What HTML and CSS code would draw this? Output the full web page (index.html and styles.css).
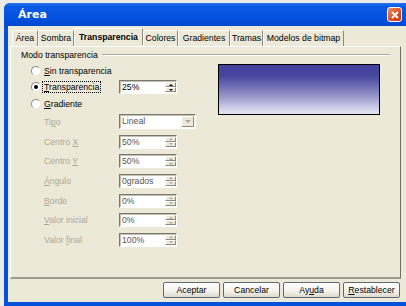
FILE: index.html
```html
<!DOCTYPE html>
<html>

<head>
  <meta charset="utf-8">
  <link rel="stylesheet" href="styles.css">
</head>

<body>
<div class="window">
  <div class="titlebar">
    <span class="title">Área</span>
    <span class="close">
      <svg width="8" height="8" viewBox="0 0 8 8"><path d="M1 1 L7 7 M7 1 L1 7" stroke="#fff" stroke-width="1.8" /></svg>
    </span>
  </div>

  <div class="client">
    <div class="tabs">
      <div class="tab" style="width: 26px">Área</div>
      <div class="tab" style="width: 36px">Sombra</div>
      <div class="tab active" style="width: 69px">Transparencia</div>
      <div class="tab" style="width: 35px">Colores</div>
      <div class="tab" style="width: 52px">Gradientes</div>
      <div class="tab" style="width: 33px">Tramas</div>
      <div class="tab" style="width: 81px">Modelos de bitmap</div>
    </div>

    <div class="panel">
      <div class="group-title">
        <span>Modo transparencia</span>
        <span class="line"></span>
      </div>

      <div class="panel-body">
        <div class="options">
          <div class="row r1">
            <div class="lbl radio-lbl"><span class="radio"></span><span><u>S</u>in transparencia</span></div>
          </div>
          <div class="row r2">
            <div class="lbl radio-lbl"><span class="radio checked"></span><span class="focus"><u>T</u>ransparencia</span></div>
            <div class="spin">
              <span class="value">25%</span>
              <span class="arrows"><span class="up"></span><span class="down"></span></span>
            </div>
          </div>
          <div class="row r3">
            <div class="lbl radio-lbl"><span class="radio"></span><span><u>G</u>radiente</span></div>
          </div>
          <div class="row sub">
            <div class="lbl off">Ti<u>p</u>o</div>
            <div class="select">
              <span class="value">Lineal</span>
              <span class="drop"><span class="tri"></span></span>
            </div>
          </div>
          <div class="row sub">
            <div class="lbl off">Centro <u>X</u></div>
            <div class="spin off"><span class="value">50%</span><span class="arrows"><span class="up"></span><span class="down"></span></span></div>
          </div>
          <div class="row sub">
            <div class="lbl off">Centro <u>Y</u></div>
            <div class="spin off"><span class="value">50%</span><span class="arrows"><span class="up"></span><span class="down"></span></span></div>
          </div>
          <div class="row sub">
            <div class="lbl off"><u>Á</u>ngulo</div>
            <div class="spin off"><span class="value">0grados</span><span class="arrows"><span class="up"></span><span class="down"></span></span></div>
          </div>
          <div class="row sub">
            <div class="lbl off"><u>B</u>orde</div>
            <div class="spin off"><span class="value">0%</span><span class="arrows"><span class="up"></span><span class="down"></span></span></div>
          </div>
          <div class="row sub">
            <div class="lbl off"><u>V</u>alor inicial</div>
            <div class="spin off"><span class="value">0%</span><span class="arrows"><span class="up"></span><span class="down"></span></span></div>
          </div>
          <div class="row sub">
            <div class="lbl off">Valor <u>f</u>inal</div>
            <div class="spin off"><span class="value">100%</span><span class="arrows"><span class="up"></span><span class="down"></span></span></div>
          </div>
        </div>

        <div class="preview"></div>
      </div>
    </div>

    <div class="buttons">
      <button>Aceptar</button>
      <button>Cancelar</button>
      <button>Ay<u>u</u>da</button>
      <button><u>R</u>establecer</button>
    </div>
  </div>
</div>
</body>

</html>
```

FILE: styles.css
```css
* {
  box-sizing: border-box;
}

body {
  margin: 0;
  width: 406px;
  height: 306px;
  overflow: hidden;
  background: #ebebea;
  font-family: "Liberation Sans", Arial, sans-serif;
  font-size: 8.7px;
  color: #000;
}

.window {
  margin: 3px 0 0 4px;
  width: 410px;
  height: 303px;
  display: flex;
  flex-direction: column;
  background: #0451dc;
  border-radius: 6px 6px 0 0;
}

.titlebar {
  height: 23px;
  display: flex;
  align-items: center;
  padding-left: 14px;
  border-radius: 6px 6px 0 0;
  background: linear-gradient(#2a74f0 0%, #0a5ae6 15%, #0453e0 60%, #0048d0 100%);
}

.title {
  color: #fff;
  font-family: "DejaVu Sans", sans-serif;
  font-weight: bold;
  font-size: 11px;
}

.close {
  margin-left: auto;
  margin-right: 12px;
  width: 15px;
  height: 15px;
  border: 1px solid #fff;
  border-radius: 3px;
  background: linear-gradient(135deg, #f08a66, #dc4a20 60%, #c83a14);
  display: flex;
  align-items: center;
  justify-content: center;
}

.client {
  flex: 1;
  margin: 0 4px 4px 4px;
  background: #ece9d8;
  padding: 4px 0 0 2px;
}

.tabs {
  display: flex;
  height: 16px;
  padding-left: 2px;
}

.tab {
  height: 16px;
  line-height: 15px;
  text-align: center;
  white-space: nowrap;
  border-left: 1px solid #fff;
  border-right: 1px solid #8d8b80;
  border-top: 1px solid #fff;
}

.tab.active {
  font-weight: bold;
  height: 17px;
  margin-top: -2px;
  line-height: 17px;
  position: relative;
  z-index: 1;
  background: #ece9d8;
}

.panel {
  width: 391px;
  height: 233px;
  border: 1px solid;
  border-color: #fff #716f64 #9d9a8e #fff;
  border-bottom-width: 2px;
  padding: 1px 10px 0 10px;
}

.group-title {
  display: flex;
  align-items: center;
  height: 14px;
}

.group-title .line {
  flex: 1;
  margin-left: 4px;
  border-top: 1px solid #aca899;
  border-bottom: 1px solid #fff;
}

.panel-body {
  display: flex;
}

.options {
  width: 197px;
}

.row {
  display: flex;
  align-items: center;
  height: 19.7px;
}

.row.r1,
.row.r3 {
  height: 17px;
}

.row.r2 {
  height: 16px;
}

.lbl {
  width: 98px;
  white-space: nowrap;
}

.radio-lbl {
  display: flex;
  align-items: center;
  padding-left: 10px;
}

.sub .lbl {
  padding-left: 23px;
}

.off {
  color: #aca899;
}

.radio {
  width: 10px;
  height: 10px;
  margin-right: 3px;
  border-radius: 50%;
  border: 1px solid;
  border-color: #8a8a8a #e8e8e8 #e8e8e8 #8a8a8a;
  background: #fff;
  display: flex;
  align-items: center;
  justify-content: center;
}

.radio.checked::after {
  content: "";
  width: 4px;
  height: 4px;
  border-radius: 50%;
  background: #000;
}

.focus {
  outline: 1px dotted #000;
  outline-offset: 0;
  margin-left: -1px;
  padding: 0 1px;
}

.spin,
.select {
  display: flex;
  align-items: stretch;
  width: 58px;
  height: 14px;
  background: #fff;
  border: 1px solid;
  border-color: #7a786c #fff #fff #7a786c;
  box-shadow: inset 1px 1px 0 #c4c1b4;
}

.select {
  width: 77px;
  height: 15px;
}

.value {
  flex: 1;
  padding-left: 2px;
  line-height: 12px;
}

.spin.off .value,
.select .value {
  color: #555;
}

.arrows {
  width: 11px;
  display: flex;
  flex-direction: column;
  padding: 1px 0;
}

.arrows span {
  flex: 1;
  background: #ece9d8;
  border: 1px solid;
  border-color: #fff #8d8b80 #8d8b80 #fff;
  display: flex;
  align-items: center;
  justify-content: center;
}

.arrows .up::after,
.arrows .down::after {
  content: "";
  border-left: 2px solid transparent;
  border-right: 2px solid transparent;
}

.arrows .up::after {
  border-bottom: 2px solid #000;
}

.arrows .down::after {
  border-top: 2px solid #000;
}

.spin.off .arrows .up::after {
  border-bottom-color: #aca899;
}

.spin.off .arrows .down::after {
  border-top-color: #aca899;
}

.drop {
  width: 13px;
  margin: 1px;
  background: #ece9d8;
  border: 1px solid;
  border-color: #fff #8d8b80 #8d8b80 #fff;
  display: flex;
  align-items: center;
  justify-content: center;
}

.tri {
  border-left: 3px solid transparent;
  border-right: 3px solid transparent;
  border-top: 3px solid #aca899;
}

.preview {
  margin-top: 2px;
  width: 162px;
  height: 51px;
  border: 1px solid #000;
  background: linear-gradient(#42429e 0%, #46469f 22%, #7070b4 45%, #a0a0d0 68%, #c8c8e6 85%, #e6e6f4 100%);
}

.buttons {
  display: flex;
  justify-content: flex-end;
  gap: 3px;
  width: 391px;
  padding-right: 1px;
  margin-top: 3px;
}

.buttons button {
  width: 57px;
  height: 16px;
  padding: 0;
  font-family: "Liberation Sans", Arial, sans-serif;
  font-size: 8.7px;
  color: #000;
  border: 1px solid #5f6a73;
  border-radius: 2px;
  background: linear-gradient(#ffffff, #f3f2ec 60%, #dcd8cc);
}
```
